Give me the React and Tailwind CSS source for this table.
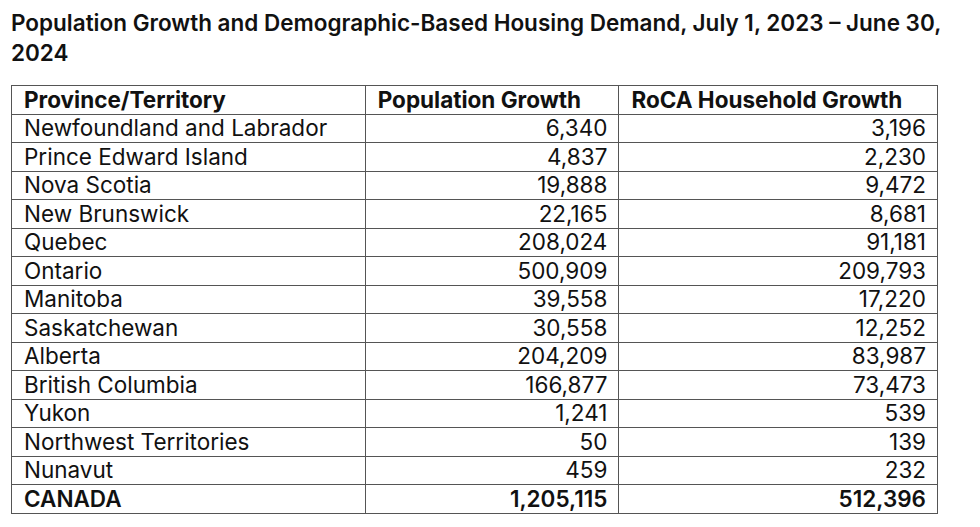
const rows = [
  ['Newfoundland and Labrador', '6,340', '3,196'],
  ['Prince Edward Island', '4,837', '2,230'],
  ['Nova Scotia', '19,888', '9,472'],
  ['New Brunswick', '22,165', '8,681'],
  ['Quebec', '208,024', '91,181'],
  ['Ontario', '500,909', '209,793'],
  ['Manitoba', '39,558', '17,220'],
  ['Saskatchewan', '30,558', '12,252'],
  ['Alberta', '204,209', '83,987'],
  ['British Columbia', '166,877', '73,473'],
  ['Yukon', '1,241', '539'],
  ['Northwest Territories', '50', '139'],
  ['Nunavut', '459', '232'],
];

const cell = 'border border-[#555] h-[28.5px] py-0 leading-none';

export default function App() {
  return (
    <div className="min-h-screen bg-white pl-[11px] pr-[8px] pt-[8px] text-[#111] font-['Inter',sans-serif]">
      <h1 className="text-[22.5px] font-semibold leading-[30px]">
        Population Growth and Demographic-Based Housing Demand, July 1, 2023 – June 30, 2024
      </h1>
      <table className="mt-[17px] border-collapse w-[927px] text-[22.5px]">
        <colgroup>
          <col className="w-[354px]" />
          <col className="w-[254px]" />
          <col className="w-[319px]" />
        </colgroup>
        <thead>
          <tr className="font-semibold">
            <th className={`${cell} text-left pl-3`}>Province/Territory</th>
            <th className={`${cell} text-left pl-3`}>Population Growth</th>
            <th className={`${cell} text-left pl-3`}>RoCA Household Growth</th>
          </tr>
        </thead>
        <tbody>
          {rows.map(([name, pop, hh]) => (
            <tr key={name}>
              <td className={`${cell} pl-3`}>{name}</td>
              <td className={`${cell} text-right pr-[11px]`}>{pop}</td>
              <td className={`${cell} text-right pr-[11px]`}>{hh}</td>
            </tr>
          ))}
          <tr className="font-semibold">
            <td className={`${cell} pl-3`}>CANADA</td>
            <td className={`${cell} text-right pr-[11px]`}>1,205,115</td>
            <td className={`${cell} text-right pr-[11px]`}>512,396</td>
          </tr>
        </tbody>
      </table>
    </div>
  );
}
